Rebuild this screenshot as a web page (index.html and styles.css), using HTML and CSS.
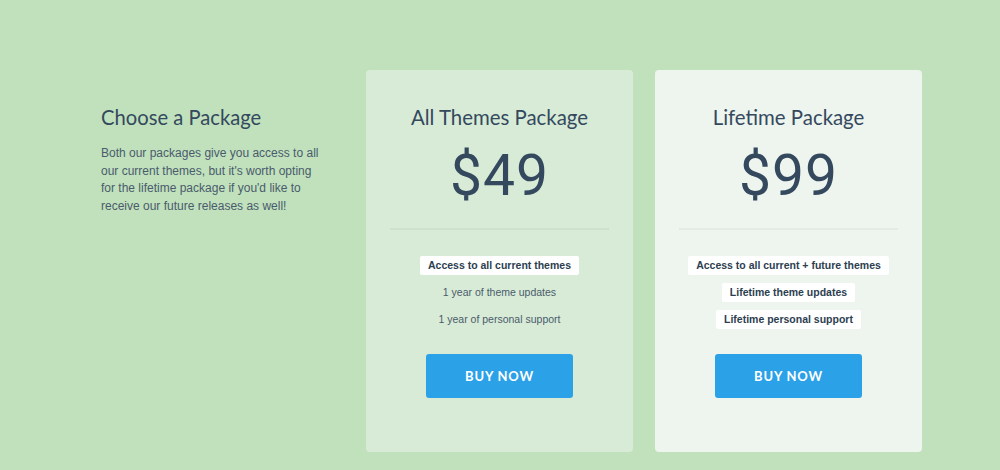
FILE: index.html
```html
<!DOCTYPE html>
<html>
<head>
<meta charset="utf-8">
<link rel="stylesheet" href="styles.css">
</head>
<body>
<div class="page">
  <div class="intro">
    <h1 class="intro-title">Choose a Package</h1>
    <p class="intro-text">Both our packages give you access to all our current themes, but it's worth opting for the lifetime package if you'd like to receive our future releases as well!</p>
  </div>
  <div class="card card-basic">
    <h2 class="card-title">All Themes Package</h2>
    <div class="price">$49</div>
    <div class="divider"></div>
    <ul class="features">
      <li><span class="tag">Access to all current themes</span></li>
      <li><span class="plain">1 year of theme updates</span></li>
      <li><span class="plain">1 year of personal support</span></li>
    </ul>
    <a class="buy" href="#">BUY NOW</a>
  </div>
  <div class="card card-life">
    <h2 class="card-title">Lifetime Package</h2>
    <div class="price">$99</div>
    <div class="divider"></div>
    <ul class="features">
      <li><span class="tag">Access to all current + future themes</span></li>
      <li><span class="tag">Lifetime theme updates</span></li>
      <li><span class="tag">Lifetime personal support</span></li>
    </ul>
    <a class="buy" href="#">BUY NOW</a>
  </div>
</div>
</body>
</html>
```
FILE: styles.css
```css
html, body {
  margin: 0;
  padding: 0;
  background: #c0e1bc;
}
body {
  width: 1000px;
  height: 470px;
  overflow: hidden;
  font-family: "Liberation Sans", Arial, sans-serif;
  color: #34495e;
}
.page {
  display: flex;
  align-items: flex-start;
  padding: 70px 0 0 101px;
}
.intro {
  width: 265px;
  padding-top: 35px;
}
.intro-title {
  margin: 0;
  font-family: "Lato", sans-serif;
  font-weight: 400;
  font-size: 20.2px;
  line-height: 24px;
  color: #34495e;
}
.intro-text {
  margin: 16px 0 0;
  width: 222px;
  font-size: 12px;
  line-height: 17.5px;
  color: #4a5b6c;
}
.card {
  width: 267px;
  box-sizing: border-box;
  height: 382px;
  padding: 35px 24px 0;
  border-radius: 4px;
  text-align: center;
  display: flex;
  flex-direction: column;
  align-items: center;
}
.card-basic {
  background: #d8ebd6;
}
.card-life {
  background: #eef4ee;
  margin-left: 22px;
}
.card-title {
  margin: 0;
  font-family: "Lato", sans-serif;
  font-weight: 400;
  font-size: 20.4px;
  line-height: 24px;
  color: #34495e;
}
.price {
  margin-top: 12px;
  font-family: "Roboto", sans-serif;
  font-weight: 400;
  font-size: 57px;
  letter-spacing: 1px;
  line-height: 70px;
  color: #34495e;
}
.divider {
  align-self: stretch;
  margin-top: 17px;
  height: 2px;
  background: rgba(0, 0, 0, 0.04);
}
.features {
  list-style: none;
  margin: 26px 0 0;
  padding: 0;
}
.features li {
  height: 19px;
  margin-bottom: 8px;
  display: flex;
  justify-content: center;
  align-items: center;
}
.tag {
  background: #ffffff;
  border-radius: 2px;
  padding: 0 8px;
  height: 19px;
  line-height: 19px;
  font-size: 10.5px;
  font-weight: 700;
  color: #2c3e50;
}
.plain {
  font-size: 10.5px;
  line-height: 19px;
  color: #4a5b6c;
}
.buy {
  display: block;
  margin-top: 17px;
  width: 147px;
  height: 44px;
  line-height: 45px;
  background: #2ba1e8;
  border-radius: 3px;
  color: #ffffff;
  text-decoration: none;
  font-family: "Lato", sans-serif;
  font-weight: 700;
  font-size: 13px;
  letter-spacing: 0.8px;
}
```
